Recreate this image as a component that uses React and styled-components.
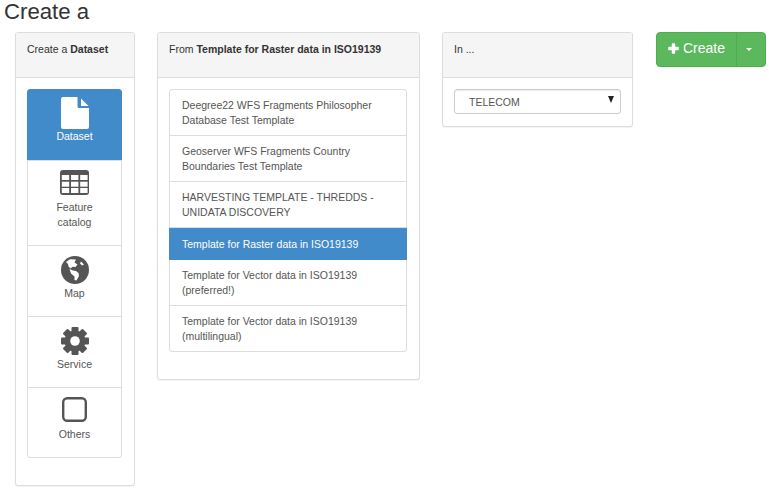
import React from "react";
import styled, { createGlobalStyle } from "styled-components";

const Global = createGlobalStyle`
  html, body { margin: 0; padding: 0; background: #fff; }
  body { font-family: "Liberation Sans", Arial, sans-serif; font-size: 11px; line-height: 15px; color: #333; }
  * { box-sizing: border-box; }
`;

const Page = styled.div`
  width: 769px;
  height: 493px;
  overflow: hidden;
`;
const Title = styled.h1`
  margin: 0 0 8px 4px;
  height: 24px;
  font-size: 22.2px;
  line-height: 23px;
  font-weight: 400;
  color: #333;
`;
const Columns = styled.div`
  display: flex;
  align-items: flex-start;
  padding-left: 15px;
`;
const Panel = styled.section`
  width: ${(p) => p.$w}px;
  margin-right: ${(p) => p.$mr}px;
  border: 1px solid #ddd;
  border-radius: 3px;
  background: #fff;
  box-shadow: 0 1px 1px rgba(0, 0, 0, 0.05);
`;
const PanelHead = styled.header`
  height: 45px;
  padding: 9px 11px 0;
  background: #f5f5f5;
  border-bottom: 1px solid #ddd;
  border-radius: 2px 2px 0 0;
  font-size: 10.5px;
`;
const PanelBody = styled.div`
  padding: 11px ${(p) => p.$pr}px ${(p) => p.$pb}px 11px;
`;
const TypeList = styled.div`
  display: flex;
  flex-direction: column;
`;
const TypeItem = styled.div`
  height: ${(p) => p.$h}px;
  margin-top: -1px;
  padding-top: ${(p) => p.$pt}px;
  display: flex;
  flex-direction: column;
  align-items: center;
  text-align: center;
  font-size: 10.5px;
  color: ${(p) => (p.$active ? "#fff" : "#555")};
  background: ${(p) => (p.$active ? "#428bca" : "transparent")};
  border: 1px solid ${(p) => (p.$active ? "#428bca" : "#ddd")};
  &:first-child { margin-top: 0; border-radius: 3px 3px 0 0; }
  &:last-child { border-radius: 0 0 3px 3px; }
  svg { display: block; flex: none; margin-bottom: ${(p) => p.$gap}px; }
`;
const TemplateList = styled.div`
  display: flex;
  flex-direction: column;
`;
const TemplateItem = styled.div`
  position: relative;
  z-index: ${(p) => (p.$active ? 1 : 0)};
  height: ${(p) => (p.$active ? 32 : 47)}px;
  margin-top: ${(p) => (p.$active ? 0 : -1)}px;
  padding: 8px 12px 0;
  font-size: 10.5px;
  color: ${(p) => (p.$active ? "#fff" : "#555")};
  background: ${(p) => (p.$active ? "#428bca" : "transparent")};
  border: 1px solid ${(p) => (p.$active ? "#428bca" : "#ddd")};
  &:first-child { margin-top: 0; border-radius: 3px 3px 0 0; }
  &:last-child { border-radius: 0 0 3px 3px; }
`;
const SelectBox = styled.div`
  height: 25px;
  border: 1px solid #ccc;
  border-radius: 3px;
  padding: 1px 4px 0 14px;
  display: flex;
  align-items: center;
  justify-content: space-between;
  font-size: 10.5px;
  color: #555;
  background: #fff;
  box-shadow: inset 0 1px 1px rgba(0,0,0,.075);
`;
const Caret = styled.span`
  width: 0;
  height: 0;
  border-left: 3px solid transparent;
  border-right: 3px solid transparent;
  border-top: 7px solid #222;
  margin: -5px 2px 0 0;
`;
const SplitButton = styled.div`
  display: flex;
  width: 110px;
  height: 35px;
  background: #5cb85c;
  border: 1px solid #4cae4c;
  border-radius: 4px;
  color: #fff;
  font-size: 14px;
  line-height: 20px;
`;
const MainPart = styled.div`
  width: 80px;
  display: flex;
  align-items: center;
  justify-content: center;
  gap: 4px;
  padding-bottom: 3px;
  border-right: 1px solid #4cae4c;
`;
const ToggleCaret = styled.div`
  flex: 1;
  display: flex;
  align-items: center;
  justify-content: center;
  padding: 0 5px 0 0;
  &::after {
    content: "";
    border-left: 3px solid transparent;
    border-right: 3px solid transparent;
    border-top: 3px solid #fff;
  }
`;

const FileIcon = () => (
  <svg width="28" height="32" viewBox="0 0 28 32">
    <path d="M2 0H16.5V9.5a1.5 1.5 0 0 0 1.5 1.5H28V30a2 2 0 0 1-2 2H2a2 2 0 0 1-2-2V2a2 2 0 0 1 2-2z" fill="#fff" />
    <path d="M20 1.5L27.5 9H20z" fill="#fff" />
  </svg>
);

const TableIcon = () => (
  <svg width="29" height="25" viewBox="0 0 29 25">
    <rect width="29" height="25" rx="3" fill="#555" />
    {[1.8, 11, 20.2].map((x) =>
      [5, 11.7, 18].map((y) => <rect key={`${x}-${y}`} x={x} y={y} width="7.4" height="5" fill="#fff" />)
    )}
  </svg>
);

const GlobeIcon = () => (
  <svg width="28" height="28" viewBox="0 0 28 28">
    <circle cx="14" cy="14" r="14" fill="#555" />
    <path d="M5 6L9 3.2L15 3.5L13.5 6.5L16.5 8.5L14.5 11L11.5 10.8L9.5 12.5L7.5 10.5L7 8z" fill="#fff" />
    <path d="M8.5 13L12 14.5L15 15L17.5 17L18 20L15.5 24.5L13.5 24L13.5 20.5L10 17.5z" fill="#fff" />
    <path d="M20 5.5L23 8.5L21 9.5L19 7.5z" fill="#fff" />
  </svg>
);

const GearIcon = () => (
  <svg width="28" height="28" viewBox="0 0 28 28">
    {[0, 45, 90, 135].map((a) => (
      <rect key={a} x="10.5" y="0" width="7" height="28" rx="1" fill="#555" transform={`rotate(${a} 14 14)`} />
    ))}
    <circle cx="14" cy="14" r="10.5" fill="#555" />
    <circle cx="14" cy="14" r="4.8" fill="#fff" />
  </svg>
);

const SquareIcon = () => (
  <svg width="25" height="25" viewBox="0 0 25 25">
    <rect x="1.2" y="1.2" width="22.6" height="22.6" rx="4" fill="none" stroke="#555" strokeWidth="2.4" />
  </svg>
);

const PlusIcon = () => (
  <svg width="11" height="11" viewBox="0 0 11 11">
    <path d="M3.8 1a.8.8 0 0 1 .8-.8h1.8a.8.8 0 0 1 .8.8v2.8h2.8a.8.8 0 0 1 .8.8v1.8a.8.8 0 0 1-.8.8H7.2V10a.8.8 0 0 1-.8.8H4.6a.8.8 0 0 1-.8-.8V7.2H1a.8.8 0 0 1-.8-.8V4.6a.8.8 0 0 1 .8-.8h2.8z" fill="#fff" />
  </svg>
);

const templates = [
  ["Deegree22 WFS Fragments Philosopher", "Database Test Template"],
  ["Geoserver WFS Fragments Country", "Boundaries Test Template"],
  ["HARVESTING TEMPLATE - THREDDS -", "UNIDATA DISCOVERY"],
  ["Template for Raster data in ISO19139"],
  ["Template for Vector data in ISO19139", "(preferred!)"],
  ["Template for Vector data in ISO19139", "(multilingual)"],
];

export default function App() {
  return (
    <Page>
      <Global />
      <Title>Create a</Title>
      <Columns>
        <Panel $w={120} $mr={22}>
          <PanelHead>Create a <b>Dataset</b></PanelHead>
          <PanelBody $pr={12} $pb={27}>
            <TypeList>
              <TypeItem $active $h={72} $pt={7} $gap={0}><FileIcon />Dataset</TypeItem>
              <TypeItem $h={86} $pt={9} $gap={5}><TableIcon />Feature<br />catalog</TypeItem>
              <TypeItem $h={72} $pt={10} $gap={2}><GlobeIcon />Map</TypeItem>
              <TypeItem $h={72} $pt={10} $gap={2}><GearIcon />Service</TypeItem>
              <TypeItem $h={71} $pt={9} $gap={5}><SquareIcon />Others</TypeItem>
            </TypeList>
          </PanelBody>
        </Panel>
        <Panel $w={263} $mr={22}>
          <PanelHead>From <b>Template for Raster data in ISO19139</b></PanelHead>
          <PanelBody $pr={12} $pb={27}>
            <TemplateList>
              {templates.map((t, i) => (
                <TemplateItem key={i} $active={t.length === 1}>
                  {t.map((l, j) => <div key={j}>{l}</div>)}
                </TemplateItem>
              ))}
            </TemplateList>
          </PanelBody>
        </Panel>
        <Panel $w={191} $mr={23}>
          <PanelHead>In ...</PanelHead>
          <PanelBody $pr={11} $pb={12}>
            <SelectBox>TELECOM<Caret /></SelectBox>
          </PanelBody>
        </Panel>
        <SplitButton>
          <MainPart><PlusIcon />Create</MainPart>
          <ToggleCaret />
        </SplitButton>
      </Columns>
    </Page>
  );
}
